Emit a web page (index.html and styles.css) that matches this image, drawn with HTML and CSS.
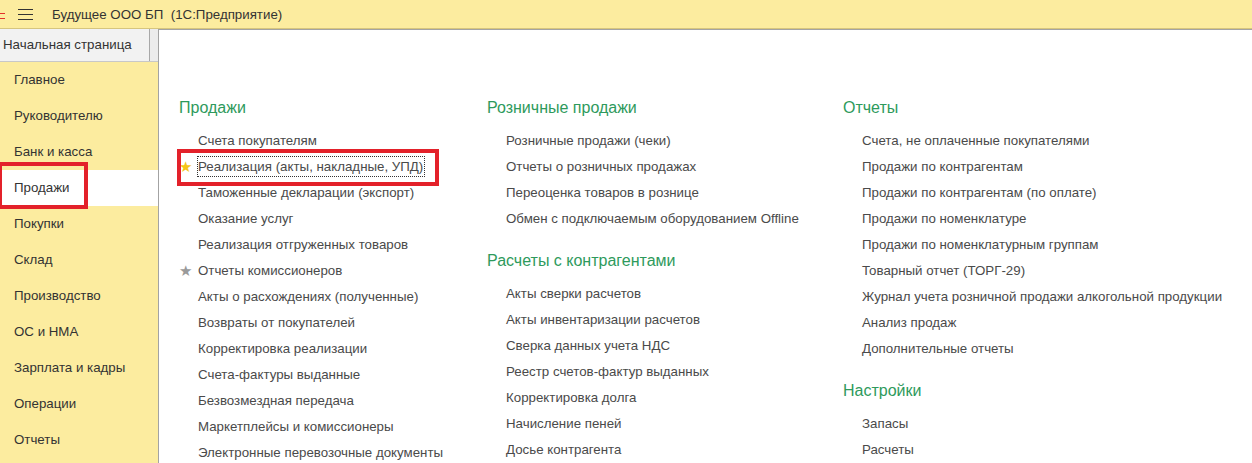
FILE: index.html
```html
<!DOCTYPE html>
<html lang="ru">
<head>
    <meta charset="UTF-8">
    <title>Будущее ООО БП (1С:Предприятие)</title>
    <link rel="stylesheet" href="styles.css">
</head>
<body>
    <div id="topbar">
        <span class="logo-cut"></span>
        <span class="burger"><i></i><i></i><i></i></span>
        <span class="app-title">Будущее ООО БП&nbsp; (1С:Предприятие)</span>
    </div>

    <div id="layout">
        <div id="left">
            <div class="tab-row">
                <div class="home-tab">Начальная страница</div>
            </div>
            <div id="sections">
                <div class="section">Главное</div>
                <div class="section">Руководителю</div>
                <div class="section">Банк и касса</div>
                <div class="section selected">Продажи</div>
                <div class="section">Покупки</div>
                <div class="section">Склад</div>
                <div class="section">Производство</div>
                <div class="section">ОС и НМА</div>
                <div class="section">Зарплата и кадры</div>
                <div class="section">Операции</div>
                <div class="section">Отчеты</div>
            </div>
            <div class="mark mark-section"></div>
        </div>

        <div id="right">
            <div class="tab-strip">
                <div class="strip-gap"></div>
                <div class="strip-open"></div>
            </div>
            <div id="content">
                <div class="col col-1">
                    <div class="group-title">Продажи</div>
                    <div class="link">Счета покупателям</div>
                    <div class="link fav"><span class="star gold">★</span><span class="focus">Реализация (акты, накладные, УПД)</span></div>
                    <div class="link">Таможенные декларации (экспорт)</div>
                    <div class="link">Оказание услуг</div>
                    <div class="link">Реализация отгруженных товаров</div>
                    <div class="link fav"><span class="star grey">★</span>Отчеты комиссионеров</div>
                    <div class="link">Акты о расхождениях (полученные)</div>
                    <div class="link">Возвраты от покупателей</div>
                    <div class="link">Корректировка реализации</div>
                    <div class="link">Счета-фактуры выданные</div>
                    <div class="link">Безвозмездная передача</div>
                    <div class="link">Маркетплейсы и комиссионеры</div>
                    <div class="link">Электронные перевозочные документы</div>
                    <div class="mark mark-link"></div>
                </div>

                <div class="col col-2">
                    <div class="group-title">Розничные продажи</div>
                    <div class="link">Розничные продажи (чеки)</div>
                    <div class="link">Отчеты о розничных продажах</div>
                    <div class="link">Переоценка товаров в рознице</div>
                    <div class="link">Обмен с подключаемым оборудованием Offline</div>

                    <div class="group-title next">Расчеты с контрагентами</div>
                    <div class="link">Акты сверки расчетов</div>
                    <div class="link">Акты инвентаризации расчетов</div>
                    <div class="link">Сверка данных учета НДС</div>
                    <div class="link">Реестр счетов-фактур выданных</div>
                    <div class="link">Корректировка долга</div>
                    <div class="link">Начисление пеней</div>
                    <div class="link">Досье контрагента</div>
                </div>

                <div class="col col-3">
                    <div class="group-title">Отчеты</div>
                    <div class="link">Счета, не оплаченные покупателями</div>
                    <div class="link">Продажи по контрагентам</div>
                    <div class="link">Продажи по контрагентам (по оплате)</div>
                    <div class="link">Продажи по номенклатуре</div>
                    <div class="link">Продажи по номенклатурным группам</div>
                    <div class="link">Товарный отчет (ТОРГ-29)</div>
                    <div class="link">Журнал учета розничной продажи алкогольной продукции</div>
                    <div class="link">Анализ продаж</div>
                    <div class="link">Дополнительные отчеты</div>

                    <div class="group-title next">Настройки</div>
                    <div class="link">Запасы</div>
                    <div class="link">Расчеты</div>
                </div>
            </div>
        </div>
    </div>
</body>
</html>
```

FILE: styles.css
```css
html, body {
    margin: 0;
    height: 100%;
    overflow: hidden;
}

body {
    font-family: "Liberation Sans", Arial, sans-serif;
    font-size: 13.3px;
    color: #333;
    background: #fff;
}

#topbar {
    height: 28px;
    background: #fcec9f;
    border-bottom: 1px solid #d6c57e;
    display: flex;
    align-items: center;
}

.logo-cut {
    width: 5px;
    height: 4px;
    margin-top: 3px;
    border-top: 1px solid #e2322a;
    border-bottom: 1px solid #e2322a;
}

.burger {
    display: flex;
    flex-direction: column;
    gap: 4px;
    margin-left: 13px;
    width: 15px;
}

.burger i {
    display: block;
    height: 1px;
    background: #333;
}

.app-title {
    margin-left: 19px;
    color: #333;
}

#layout {
    display: flex;
    height: 434px;
}

#left {
    width: 158px;
    position: relative;
    display: flex;
    flex-direction: column;
}

.tab-row {
    height: 32px;
    background: #ececec;
    border-bottom: 1px solid #c8c8c8;
}

.home-tab {
    width: 146px;
    height: 32px;
    line-height: 32px;
    padding-left: 3px;
    background: #f2f2f2;
    border-right: 1px solid #a8a8a8;
}

#sections {
    flex: 1;
    background: #fcec9f;
}

.section {
    height: 36px;
    line-height: 36px;
    padding-left: 14px;
    color: #333;
}

.section.selected {
    background: #fff;
}

#right {
    flex: 1;
    display: flex;
    flex-direction: column;
}

.tab-strip {
    height: 4px;
    display: flex;
    background: #ebebeb;
    border-bottom: 1px solid #a3a3a3;
}

.strip-gap {
    width: 251px;
    border-right: 1px solid #a8a8a8;
}

.strip-open {
    width: 158px;
    background: #fff;
    border-right: 1px solid #a8a8a8;
}

#content {
    flex: 1;
    display: flex;
    border-left: 1px solid #a3a3a3;
    padding-top: 68px;
    padding-left: 20px;
}

.col {
    position: relative;
}

.col-1 {
    width: 308px;
}

.col-2 {
    width: 356px;
}

.group-title {
    font-size: 16px;
    line-height: 20px;
    color: #2e9a5c;
    margin-bottom: 10px;
}

.group-title.next {
    margin-top: 19px;
}

.link {
    position: relative;
    height: 26px;
    line-height: 26px;
    padding-left: 19px;
    color: #4a4a4a;
    white-space: nowrap;
}

.star {
    position: absolute;
    left: 0;
    top: 0;
    font-size: 15px;
}

.star.gold {
    color: #f5c518;
}

.star.grey {
    color: #9a9a9a;
}

.focus {
    outline: 1px dotted #333;
    outline-offset: 0;
    padding: 2px 1px 2px 0;
}

.mark {
    position: absolute;
    border: 4px solid #e3212a;
    pointer-events: none;
}

.mark-section {
    left: -2px;
    top: 133px;
    width: 82px;
    height: 39px;
}

.mark-link {
    left: -2px;
    top: 51px;
    width: 254px;
    height: 29px;
}
```
